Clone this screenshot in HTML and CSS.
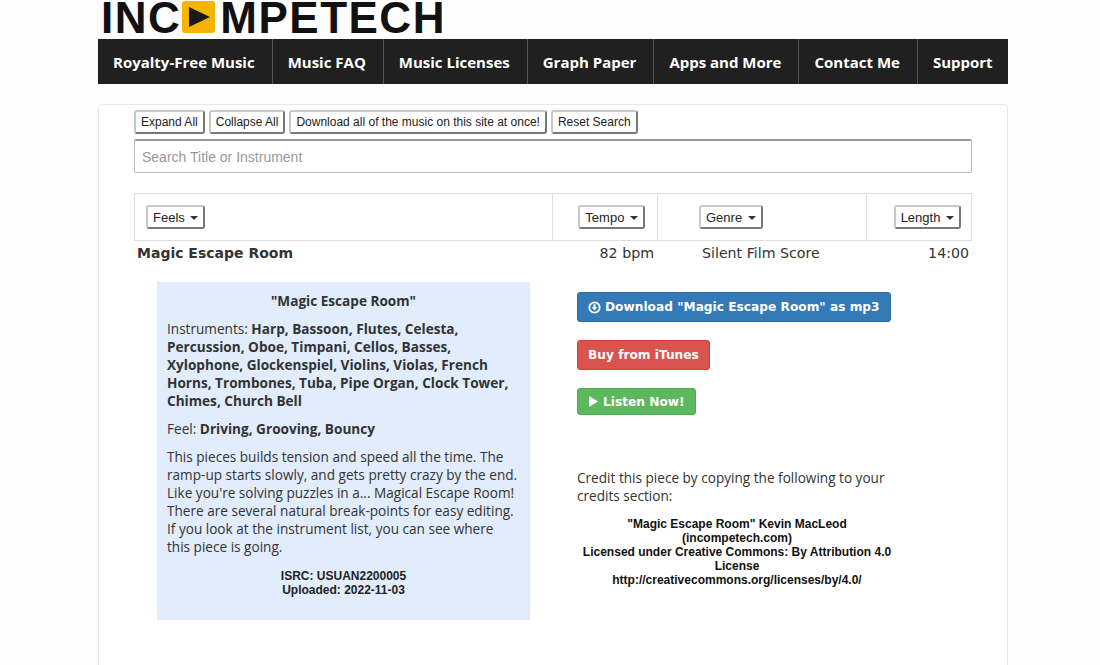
FILE: index.html
```html
<!DOCTYPE html>
<html lang="en">
<head>
    <meta charset="UTF-8">
    <meta name="viewport" content="width=device-width, initial-scale=1.0">
    <title>Magic Escape Room</title>
    <link rel="stylesheet" href="styles.css">
</head>
<body>
    <div class="wrapper">
        <div class="logo">
            <span class="logo-text">INC</span>
            <svg class="logo-icon" width="34" height="33" viewBox="0 0 34 33">
                <rect x="0" y="0" width="33" height="32" rx="3" fill="#f4b400"/>
                <path d="M7 6 L28 16 L7 26 Z" fill="#1a1a1a"/>
            </svg>
            <span class="logo-text">MPETECH</span>
        </div>
        <nav class="nav">
            <a class="nav-item">Royalty-Free Music</a>
            <a class="nav-item">Music FAQ</a>
            <a class="nav-item">Music Licenses</a>
            <a class="nav-item">Graph Paper</a>
            <a class="nav-item">Apps and More</a>
            <a class="nav-item">Contact Me</a>
            <a class="nav-item">Support</a>
        </nav>
        <div class="panel">
            <div class="tools">
                <button class="btn">Expand All</button>
                <button class="btn">Collapse All</button>
                <button class="btn">Download all of the music on this site at once!</button>
                <button class="btn">Reset Search</button>
            </div>
            <input class="search" type="text" placeholder="Search Title or Instrument">
            <div class="filters">
                <div class="filter filter-feels"><button class="btn btn-drop">Feels <span class="caret"></span></button></div>
                <div class="filter filter-tempo"><button class="btn btn-drop">Tempo <span class="caret"></span></button></div>
                <div class="filter filter-genre"><button class="btn btn-drop">Genre <span class="caret"></span></button></div>
                <div class="filter filter-length"><button class="btn btn-drop">Length <span class="caret"></span></button></div>
            </div>
            <div class="track">
                <div class="track-title">Magic Escape Room</div>
                <div class="track-tempo">82 bpm</div>
                <div class="track-genre">Silent Film Score</div>
                <div class="track-length">14:00</div>
            </div>
            <div class="detail">
                <div class="info">
                    <div class="info-title">"Magic Escape Room"</div>
                    <p>Instruments: <b>Harp, Bassoon, Flutes, Celesta, Percussion, Oboe, Timpani, Cellos, Basses, Xylophone, Glockenspiel, Violins, Violas, French Horns, Trombones, Tuba, Pipe Organ, Clock Tower, Chimes, Church Bell</b></p>
                    <p>Feel: <b>Driving, Grooving, Bouncy</b></p>
                    <p>This pieces builds tension and speed all the time. The ramp-up starts slowly, and gets pretty crazy by the end. Like you're solving puzzles in a... Magical Escape Room! There are several natural break-points for easy editing. If you look at the instrument list, you can see where this piece is going.</p>
                    <div class="isrc">ISRC: USUAN2200005<br>Uploaded: 2022-11-03</div>
                </div>
                <div class="actions">
                    <a class="action action-blue">
                        <svg class="action-icon" width="13" height="13" viewBox="0 0 13 13">
                            <circle cx="6.5" cy="6.5" r="5.2" fill="none" stroke="#fff" stroke-width="1.8"/>
                            <path d="M5.4 3.2 H7.6 V6.2 H9.4 L6.5 9.6 L3.6 6.2 H5.4 Z" fill="#fff"/>
                        </svg>
                        Download "Magic Escape Room" as mp3
                    </a>
                    <a class="action action-red">Buy from iTunes</a>
                    <a class="action action-green">
                        <svg class="action-icon" width="11" height="13" viewBox="0 0 11 13">
                            <path d="M1 1 L10 6.5 L1 12 Z" fill="#fff"/>
                        </svg>
                        Listen Now!
                    </a>
                    <p class="credit-intro">Credit this piece by copying the following to your credits section:</p>
                    <div class="credit">"Magic Escape Room" Kevin MacLeod (incompetech.com)<br>Licensed under Creative Commons: By Attribution 4.0 License<br>http://creativecommons.org/licenses/by/4.0/</div>
                </div>
            </div>
        </div>
    </div>
</body>
</html>
```

FILE: styles.css
```css
html, body {
    height: 100%;
    overflow: hidden;
}
body {
    margin: 0;
    background-color: #fdfdfd;
    font-family: "Open Sans", sans-serif;
    font-size: 13.6px;
    line-height: 18px;
    color: #333;
}
.wrapper {
    width: 910px;
    margin-left: 98px;
}
.logo {
    display: flex;
    align-items: flex-start;
    height: 39px;
    padding-left: 3px;
}
.logo-text {
    font-family: "Liberation Sans", sans-serif;
    font-weight: bold;
    font-size: 44px;
    line-height: 36px;
    letter-spacing: 1.5px;
    color: #111;
}
.logo-icon {
    margin: 1px 4px 0 1px;
}
.nav {
    display: flex;
    height: 45px;
    background-color: #202020;
}
.nav-item {
    display: flex;
    align-items: center;
    padding: 0 17px 0 15px;
    border-right: 1px solid #555;
    font-weight: bold;
    font-size: 15px;
    color: #fff;
    white-space: nowrap;
}
.nav-item:last-child {
    border-right: 0;
}
.panel {
    margin-top: 20px;
    height: 561px;
    padding: 5px 35px 0 35px;
    background-color: #fff;
    border: 1px solid #e8e8e8;
    border-bottom: 0;
    border-radius: 5px 5px 0 0;
    box-sizing: border-box;
}
.tools {
    display: flex;
    gap: 4px;
    height: 24px;
}
.btn {
    height: 24px;
    padding: 0 5px;
    background: #fff;
    border: 2px solid;
    border-color: #c8c8c8 #777 #777 #c8c8c8;
    border-radius: 3px;
    font-family: "Liberation Sans", sans-serif;
    font-size: 12px;
    color: #222;
    white-space: nowrap;
}
.btn-drop {
    font-size: 13px;
}
.caret {
    display: inline-block;
    margin-left: 2px;
    vertical-align: middle;
    border-top: 4px solid #333;
    border-left: 4px solid transparent;
    border-right: 4px solid transparent;
}
.search {
    display: block;
    width: 100%;
    height: 34px;
    margin-top: 5px;
    padding: 0 7px;
    box-sizing: border-box;
    border: 1px solid #bbb;
    border-top: 2px solid #999;
    border-radius: 2px;
    font-family: "Liberation Sans", sans-serif;
    font-size: 14px;
    color: #333;
}
.search::placeholder {
    color: #999;
}
.filters {
    display: grid;
    grid-template-columns: 418px 105px 209px 106px;
    height: 48px;
    margin-top: 20px;
    box-sizing: border-box;
    border: 1px solid #ddd;
}
.filter {
    display: flex;
    align-items: center;
    border-right: 1px solid #ddd;
}
.filter:last-child {
    border-right: 0;
}
.filter-feels {
    padding-left: 11px;
}
.filter-tempo {
    justify-content: flex-end;
    padding-right: 12px;
}
.filter-genre {
    padding-left: 41px;
}
.filter-length {
    justify-content: flex-end;
    padding-right: 12px;
}
.track {
    display: grid;
    grid-template-columns: 418px 105px 209px 106px;
    height: 24px;
    align-items: center;
    font-family: "DejaVu Sans", sans-serif;
    font-size: 14.2px;
    color: #333;
}
.track-title {
    padding-left: 3px;
    font-weight: bold;
    font-size: 14px;
}
.track-tempo {
    padding-right: 3px;
    text-align: right;
}
.track-genre {
    padding-left: 45px;
}
.track-length {
    padding-right: 3px;
    text-align: right;
}
.detail {
    display: flex;
    margin-top: 17px;
}
.info {
    width: 373px;
    height: 338px;
    margin-left: 23px;
    padding: 10px 10px 0 10px;
    box-sizing: border-box;
    background-color: #e1ecfc;
}
.info p {
    margin: 0 0 10px;
}
.info-title {
    margin-bottom: 10px;
    font-weight: bold;
    text-align: center;
}
.isrc {
    margin-top: 13px;
    font-family: "Liberation Sans", sans-serif;
    font-weight: bold;
    font-size: 12px;
    line-height: 14px;
    text-align: center;
    color: #222;
}
.actions {
    display: flex;
    flex-direction: column;
    align-items: flex-start;
    width: 320px;
    margin-left: 47px;
    padding-top: 10px;
}
.action {
    display: flex;
    align-items: center;
    gap: 4px;
    height: 30px;
    margin-bottom: 18px;
    padding: 0 10px;
    box-sizing: border-box;
    border: 1px solid transparent;
    border-radius: 3px;
    font-family: "DejaVu Sans", sans-serif;
    font-weight: bold;
    font-size: 12.2px;
    color: #fff;
    white-space: nowrap;
}
.action-blue {
    background-color: #337ab7;
    border-color: #2e6da4;
}
.action-red {
    background-color: #d9534f;
    border-color: #d43f3a;
}
.action-green {
    height: 27px;
    background-color: #5cb85c;
    border-color: #4cae4c;
}
.credit-intro {
    margin: 36px 0 0;
}
.credit {
    width: 320px;
    margin-top: 12px;
    font-family: "Liberation Sans", sans-serif;
    font-weight: bold;
    font-size: 12px;
    line-height: 14px;
    text-align: center;
    color: #111;
}
```
